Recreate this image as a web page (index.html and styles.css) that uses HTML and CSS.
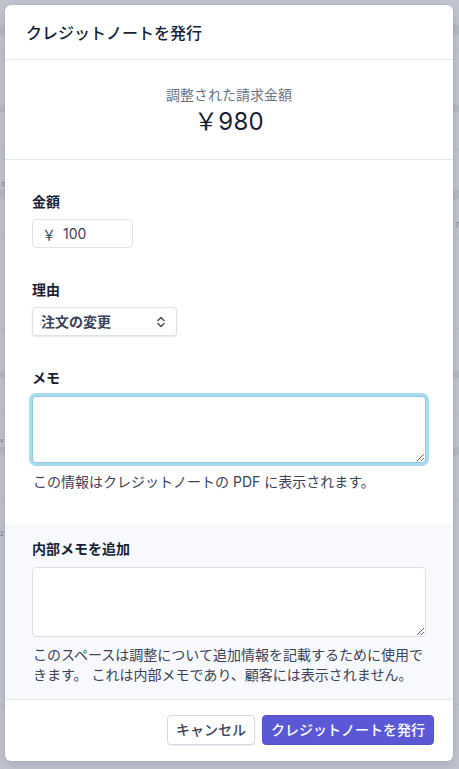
FILE: index.html
```html
<!DOCTYPE html>
<html lang="ja">
<head>
<meta charset="utf-8">
<title>クレジットノートを発行</title>
<link rel="stylesheet" href="styles.css">
</head>
<body>
<div class="page">
  <div class="band b1"></div>
  <div class="row r1"></div>
  <div class="band b2"></div>
  <div class="row r2"></div>
  <div class="band b3"><span class="ghost gl">ミ</span></div>
  <div class="row r3"><span class="ghost gr">7</span></div>
  <div class="row r4"></div>
  <div class="band b4"></div>
  <div class="row r5"></div>
  <div class="band b5"><span class="ghost gl">v</span></div>
  <div class="row r6"></div>
  <div class="row r7"><span class="ghost gl g2">2</span></div>
</div>

<div class="modal">
  <header class="modal-header">
    <h1 class="title">クレジットノートを発行</h1>
  </header>

  <section class="summary">
    <div class="summary-label">調整された請求金額</div>
    <div class="summary-amount">￥980</div>
  </section>

  <section class="form">
    <div class="field">
      <label class="label">金額</label>
      <div class="amount-input">
        <span class="currency">￥</span>
        <input class="amount-value" type="text" value="100">
      </div>
    </div>

    <div class="field">
      <label class="label">理由</label>
      <div class="select">
        <span class="select-text">注文の変更</span>
        <svg class="chevron" width="10" height="12" viewBox="0 0 10 12">
          <path d="M2 4.5 L5 1.5 L8 4.5" fill="none" stroke="#4f566b" stroke-width="1.6" stroke-linecap="round" stroke-linejoin="round"/>
          <path d="M2 7.5 L5 10.5 L8 7.5" fill="none" stroke="#4f566b" stroke-width="1.6" stroke-linecap="round" stroke-linejoin="round"/>
        </svg>
      </div>
    </div>

    <div class="field last">
      <label class="label">メモ</label>
      <textarea class="textarea focused"></textarea>
      <p class="help help-memo">この情報はクレジットノートの PDF に表示されます。</p>
    </div>
  </section>

  <section class="internal">
    <label class="label">内部メモを追加</label>
    <textarea class="textarea internal-ta"></textarea>
    <p class="help help-internal">このスペースは調整について追加情報を記載するために使用できます。 これは内部メモであり、顧客には表示されません。</p>
  </section>

  <footer class="footer">
    <button class="btn btn-secondary">キャンセル</button>
    <button class="btn btn-primary">クレジットノートを発行</button>
  </footer>
</div>
</body>
</html>
```

FILE: styles.css
```css
* { box-sizing: border-box; }

html, body {
  margin: 0;
  padding: 0;
}

body {
  width: 459px;
  height: 769px;
  overflow: hidden;
  background: #c3c6d1;
  font-family: "Inter", "Noto Sans CJK JP", sans-serif;
  color: #1a1f36;
  position: relative;
}

/* background page (dimmed) */
.page {
  display: flex;
  flex-direction: column;
}
.band { background: #b7bbc7; position: relative; }
.row { border-bottom: 1px solid #b8bcc8; position: relative; }
.b1 { margin-top: 25px; height: 10px; }
.r1 { height: 15px; }
.b2 { margin-top: 55px; height: 7px; }
.r2 { height: 38px; }
.b3 { margin-top: 40px; height: 9px; }
.r3 { height: 40px; }
.r4 { height: 90px; }
.b4 { margin-top: 42px; height: 7px; }
.r5 { height: 37px; }
.b5 { margin-top: 32px; height: 8px; }
.r6 { height: 45px; }
.r7 { height: 205px; }
.ghost {
  position: absolute;
  font-size: 6px;
  line-height: 8px;
  color: #6b7080;
}
.gl { left: 0; top: -10px; }
.gr { right: 0; top: 22px; }
.g2 { top: 30px; }

/* modal overlay */
.modal {
  position: absolute;
  left: 5px;
  top: 5px;
  width: 448px;
  height: 756px;
  background: #ffffff;
  border-radius: 6px;
  box-shadow: 0 4px 14px rgba(40, 45, 70, 0.18), 0 0 0 1px rgba(40, 45, 70, 0.04);
  overflow: hidden;
  display: flex;
  flex-direction: column;
}

.modal-header {
  padding: 16px 21px 14px;
  border-bottom: 1px solid #e3e8ee;
}
.title {
  margin: 0;
  font-size: 16px;
  line-height: 24px;
  font-weight: 500;
  color: #1a1f36;
}

.summary {
  padding: 25px 0 23px;
  border-bottom: 1px solid #e3e8ee;
  text-align: center;
}
.summary-label {
  font-size: 14px;
  line-height: 20px;
  color: #697386;
}
.summary-amount {
  margin-top: 3px;
  font-size: 24px;
  line-height: 28px;
  color: #1a1f36;
  letter-spacing: 0.3px;
}

.form {
  padding: 32px 27px 32px 27px;
  display: flex;
  flex-direction: column;
  gap: 32px;
}
.field {
  display: flex;
  flex-direction: column;
  align-items: flex-start;
}

.label {
  display: block;
  font-size: 14px;
  line-height: 20px;
  font-weight: 600;
  color: #1a1f36;
  margin-bottom: 7px;
}

.amount-input {
  width: 101px;
  height: 29px;
  border: 1px solid #e0e4ea;
  border-radius: 4px;
  display: flex;
  align-items: center;
  padding-left: 9px;
  background: #fff;
}
.currency {
  font-size: 14px;
  color: #3c4257;
  width: 21px;
}
.amount-value {
  border: 0;
  outline: none;
  padding: 0;
  width: 60px;
  font-family: inherit;
  font-size: 14px;
  color: #3c4257;
  background: transparent;
}

.select {
  width: 145px;
  height: 29px;
  border: 1px solid #dfe3e9;
  border-radius: 4px;
  box-shadow: 0 1px 2px rgba(60, 66, 87, 0.14);
  display: flex;
  align-items: center;
  justify-content: space-between;
  padding: 0 10px 0 8px;
  background: #fff;
}
.select-text {
  font-size: 14px;
  line-height: 20px;
  font-weight: 600;
  color: #3c4257;
}
.chevron { display: block; }

.textarea {
  display: block;
  width: 394px;
  margin: 0;
  padding: 6px 8px;
  border: 1px solid #dcdfe6;
  border-radius: 4px;
  font-family: inherit;
  font-size: 14px;
  background: #fff;
  resize: vertical;
  outline: none;
}
.field.last .label { margin-bottom: 8px; }
.focused {
  height: 67px;
  border-color: #8fc9e6;
  box-shadow: 0 0 0 3px #a8daf0;
}
.internal-ta {
  height: 70px;
}

.help {
  margin: 0;
  font-size: 14px;
  line-height: 20px;
  color: #3c4257;
}
.help-memo { margin-top: 9px; padding-left: 1px; }
.help-internal { margin-top: 8px; padding-left: 1px; }

.internal {
  background: #f7f9fc;
  padding: 15px 27px 14px;
  flex: 0 0 auto;
}
.internal .label { margin-bottom: 8px; }

.footer {
  border-top: 1px solid #e3e8ee;
  padding: 15px 19px 15px;
  display: flex;
  justify-content: flex-end;
  gap: 7px;
}
.btn {
  height: 30px;
  padding: 0 8px;
  border-radius: 4px;
  font-family: inherit;
  font-size: 14px;
  line-height: 20px;
  font-weight: 500;
  white-space: nowrap;
  cursor: pointer;
}
.btn-secondary {
  background: #fff;
  color: #3c4257;
  border: 1px solid #d6d9e1;
  box-shadow: 0 1px 1px rgba(60, 66, 87, 0.08);
}
.btn-primary {
  background: #5b58d6;
  color: #ffffff;
  border: 1px solid #5552d2;
}
```
